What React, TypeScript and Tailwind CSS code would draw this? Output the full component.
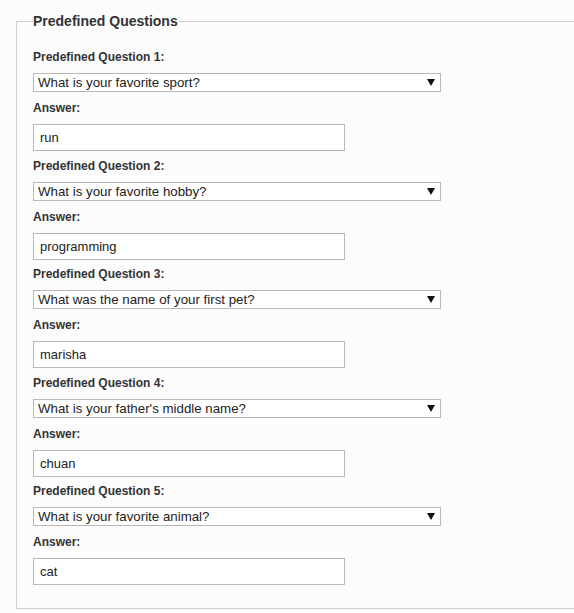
import React from 'react';

const QUESTIONS = [
    { q: 'What is your favorite sport?', a: 'run' },
    { q: 'What is your favorite hobby?', a: 'programming' },
    { q: 'What was the name of your first pet?', a: 'marisha' },
    { q: "What is your father's middle name?", a: 'chuan' },
    { q: 'What is your favorite animal?', a: 'cat' },
];

const QuestionBlock: React.FC<{ index: number; q: string; a: string }> = ({
    index,
    q,
    a,
}) => (
    <div className="mb-[7.5px] last:mb-0">
        <label className="mb-[9px] block text-[12px] leading-[14px] font-bold text-[#333]">
            Predefined Question {index}:
        </label>
        {/* Select with custom arrow */}
        <div className="relative w-[408px]">
            <select
                defaultValue={q}
                className="block h-[19px] w-full appearance-none rounded-none border border-[#b9b9b9] bg-white pr-5 pl-[4px] text-[13.3px] leading-[17px] text-[#222] outline-none"
            >
                <option>{q}</option>
            </select>
            <span className="pointer-events-none absolute top-[6px] right-[6px] h-0 w-0 border-x-[4px] border-t-[7px] border-x-transparent border-t-[#111]" />
        </div>
        <label className="mt-[9px] mb-[9px] block text-[12px] leading-[14px] font-bold text-[#333]">
            Answer:
        </label>
        <input
            type="text"
            defaultValue={a}
            className="block h-[27px] w-[312px] rounded-none border border-[#b9b9b9] bg-white px-[6px] text-[13px] text-[#222] outline-none"
        />
    </div>
);

export default function App() {
    return (
        <div className="min-h-screen overflow-hidden bg-[#fcfcfc] pt-[13px] font-['Liberation_Sans',Arial,sans-serif]">
            <fieldset className="ml-4 w-[600px] border border-[#cfcfcf] px-4 pt-[21px] pb-[23px]">
                <legend className="px-0 text-[14px] leading-[16px] font-bold text-[#333]">
                    Predefined Questions
                </legend>
                {QUESTIONS.map((item, i) => (
                    <QuestionBlock key={i} index={i + 1} q={item.q} a={item.a} />
                ))}
            </fieldset>
        </div>
    );
}
